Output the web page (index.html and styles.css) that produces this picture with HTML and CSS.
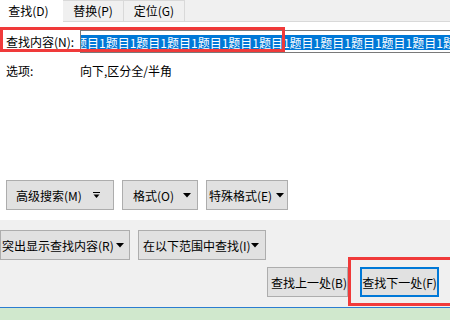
FILE: index.html
```html
<!DOCTYPE html>
<html lang="zh-CN">
<head>
    <meta charset="UTF-8">
    <meta name="viewport" content="width=device-width, initial-scale=1.0">
    <title>查找和替换</title>
    <link rel="stylesheet" href="styles.css">
</head>
<body>
    <div class="dialog">
        <!-- Tabs -->
        <div class="tabs">
            <div class="tab active">查找(D)</div>
            <div class="tab">替换(P)</div>
            <div class="tab">定位(G)</div>
            <div class="tab-fill"></div>
        </div>

        <!-- Find panel -->
        <div class="panel">
            <div class="find-row">
                <label class="find-label">查找内容(N):</label>
                <div class="find-input">
                    <span class="selected">题目1题目1题目1题目1题目1题目1题目1题目1题目1题目1题目1题目1题目1</span>
                </div>
            </div>
            <div class="options-row">
                <span class="options-label">选项:</span>
                <span>向下,区分全/半角</span>
            </div>

            <div class="btn-row first-row">
                <button class="btn btn-adv">高级搜索(M)
                    <svg width="7" height="7" viewBox="0 0 7 7"><rect x="0" y="0" width="7" height="1" fill="#000"/><path d="M0.5 2.5 H6.5 L3.5 6 Z" fill="#000"/></svg>
                </button>
                <button class="btn btn-format">格式(O)
                    <svg width="8" height="5" viewBox="0 0 8 5"><path d="M0 0 H8 L4 4.5 Z" fill="#000"/></svg>
                </button>
                <button class="btn btn-special">特殊格式(E)
                    <svg width="8" height="5" viewBox="0 0 8 5"><path d="M0 0 H8 L4 4.5 Z" fill="#000"/></svg>
                </button>
            </div>
        </div>

        <!-- Lower area -->
        <div class="lower">
            <div class="btn-row second-row">
                <button class="btn btn-highlight">突出显示查找内容(R)
                    <svg width="8" height="5" viewBox="0 0 8 5"><path d="M0 0 H8 L4 4.5 Z" fill="#000"/></svg>
                </button>
                <button class="btn btn-range">在以下范围中查找(I)
                    <svg width="8" height="5" viewBox="0 0 8 5"><path d="M0 0 H8 L4 4.5 Z" fill="#000"/></svg>
                </button>
            </div>
            <div class="btn-row nav-row">
                <button class="btn btn-prev">查找上一处(B)</button>
                <button class="btn btn-next">查找下一处(F)</button>
            </div>
        </div>

        <div class="status"></div>

        <!-- Red annotation boxes -->
        <div class="mark mark-find"></div>
        <div class="mark mark-next"></div>
    </div>
</body>
</html>
```

FILE: styles.css
```css
body {
    margin: 0;
    padding: 0;
    background-color: #f0f0f0;
    font-family: "Noto Sans CJK SC", "Noto Sans", sans-serif;
    font-size: 12px;
    color: #000;
}

.dialog {
    position: relative;
    width: 450px;
    height: 320px;
    overflow: hidden;
}

.tabs {
    display: flex;
    height: 22px;
}

.tab {
    width: 61px;
    box-sizing: border-box;
    border: 1px solid #d9d9d9;
    border-left: none;
    background-color: #f0f0f0;
    line-height: 20px;
    text-align: center;
}

.tab.active {
    width: 63px;
    background-color: #fff;
    border: none;
    line-height: 22px;
    padding-right: 6px;
}

.tab-fill {
    flex: 1;
    border-bottom: 1px solid #d9d9d9;
}

.panel {
    background-color: #fff;
    height: 198px;
    display: flex;
    flex-direction: column;
}

.find-row {
    display: flex;
    margin-top: 8px;
    height: 23px;
}

.find-label {
    width: 80px;
    padding-left: 6px;
    box-sizing: border-box;
    line-height: 23px;
    white-space: nowrap;
}

.find-input {
    flex: 1;
    border: 1px solid #7a7a7a;
    border-right: none;
    overflow: hidden;
    white-space: nowrap;
    padding-top: 3px;
    box-sizing: border-box;
}

.selected {
    display: inline-block;
    margin-left: -6px;
    background-color: #0078d7;
    color: #fff;
    line-height: 15px;
    height: 15px;
}

.options-row {
    display: flex;
    margin-top: 10px;
    line-height: 16px;
}

.options-label {
    width: 80px;
    padding-left: 6px;
    box-sizing: border-box;
}

.btn-row {
    display: flex;
}

.first-row {
    margin-top: auto;
    margin-bottom: 10px;
    padding-left: 6px;
    gap: 8px;
}

.btn {
    display: flex;
    align-items: center;
    justify-content: space-between;
    box-sizing: border-box;
    height: 30px;
    border: 1px solid #adadad;
    background-color: #e1e1e1;
    font-family: inherit;
    font-size: 12px;
    color: #000;
    padding: 0 4px 0 9px;
    margin: 0;
    white-space: nowrap;
}

.btn-adv {
    width: 108px;
    padding-right: 13px;
}

.btn-format {
    width: 76px;
    padding-left: 10px;
    padding-right: 6px;
}

.btn-special {
    width: 82px;
    padding-left: 2px;
    padding-right: 3px;
}

.lower {
    height: 87px;
    display: flex;
    flex-direction: column;
}

.second-row {
    margin-top: 10px;
    gap: 8px;
}

.btn-highlight {
    width: 130px;
    padding-left: 1px;
    padding-right: 5px;
}

.btn-range {
    width: 128px;
    padding-left: 4px;
    padding-right: 6px;
}

.nav-row {
    justify-content: flex-end;
    margin-top: 7px;
    padding-right: 11px;
    gap: 12px;
}

.btn-prev {
    width: 81px;
    padding: 0 0 0 3px;
}

.btn-next {
    width: 79px;
    border: 2px solid #0078d7;
    padding: 0;
    justify-content: center;
}

.status {
    height: 12px;
    border-top: 1px solid #2b7cd0;
    background-color: #d0e8cd;
}

.mark {
    position: absolute;
    border: 3px solid #f03a3a;
    box-sizing: border-box;
}

.mark-find {
    left: 0;
    top: 27px;
    width: 285px;
    height: 25px;
}

.mark-next {
    left: 348px;
    top: 257px;
    width: 105px;
    height: 49px;
}
```
